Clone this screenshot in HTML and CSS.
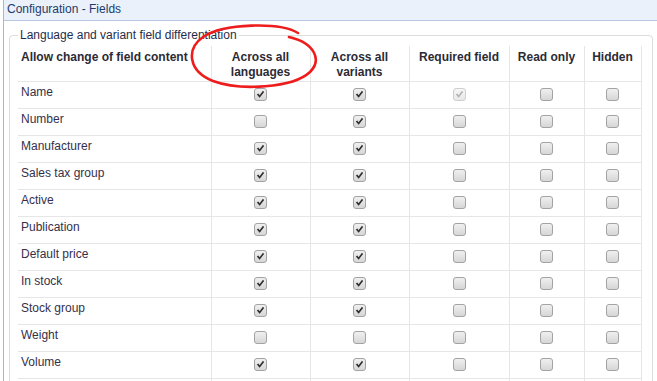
FILE: index.html
```html
<!DOCTYPE html>
<html lang="en">

<head>
    <meta charset="UTF-8">
    <meta name="viewport" content="width=device-width, initial-scale=1.0">
    <title>Configuration - Fields</title>
    <link rel="stylesheet" href="styles.css">
</head>

<body>
    <div class="panel">
        <div class="panel-head">Configuration - Fields</div>

        <fieldset class="group">
            <legend>Language and variant field differentiation</legend>
            <table class="fields">
                <colgroup>
                    <col class="c-name">
                    <col class="c-lang">
                    <col class="c-var">
                    <col class="c-req">
                    <col class="c-ro">
                    <col class="c-hid">
                </colgroup>
                <thead>
                    <tr>
                        <th class="left">Allow change of field content</th>
                        <th>Across all languages</th>
                        <th>Across all variants</th>
                        <th>Required field</th>
                        <th>Read only</th>
                        <th>Hidden</th>
                    </tr>
                </thead>
                <tbody id="rows"></tbody>
            </table>
        </fieldset>

        <!-- hand drawn mark around the column header -->
        <svg class="mark" width="657" height="381" viewBox="0 0 657 381">
            <path d="M298 33 C280 22 224 23 203 37 C186 49 188 71 213 81 C240 91 293 88 310 72 C322 60 315 43 289 37"
                fill="none" stroke="#ee1c1c" stroke-width="2.6" stroke-linecap="round" />
        </svg>
    </div>

    <script>
        // name, languages, variants, required, read only, hidden  (2 = checked + disabled)
        const fields = [
            ["Name", 1, 1, 2, 0, 0],
            ["Number", 0, 1, 0, 0, 0],
            ["Manufacturer", 1, 1, 0, 0, 0],
            ["Sales tax group", 1, 1, 0, 0, 0],
            ["Active", 1, 1, 0, 0, 0],
            ["Publication", 1, 1, 0, 0, 0],
            ["Default price", 1, 1, 0, 0, 0],
            ["In stock", 1, 1, 0, 0, 0],
            ["Stock group", 1, 1, 0, 0, 0],
            ["Weight", 0, 0, 0, 0, 0],
            ["Volume", 1, 1, 0, 0, 0]
        ];

        const tick = '<svg viewBox="0 0 13 13" width="11" height="11"><path d="M2.2 6.6 L3.9 5.4 L5.4 7.4 L9.4 2.2 L10.8 3.4 L5.5 10.3 Z"/></svg>';

        const rows = document.getElementById("rows");
        fields.forEach(function (f) {
            let html = "<td class=\"left\">" + f[0] + "</td>";
            for (let i = 1; i < f.length; i++) {
                let cls = "cb";
                if (f[i] == 1) cls += " on";
                if (f[i] == 2) cls += " on off";
                html += "<td><span class=\"" + cls + "\">" + (f[i] ? tick : "") + "</span></td>";
            }
            const tr = document.createElement("tr");
            tr.innerHTML = html;
            rows.appendChild(tr);
        });

        // the list goes on below the fold
        const more = document.createElement("tr");
        more.className = "more";
        more.innerHTML = "<td class=\"left\"></td><td></td><td></td><td></td><td></td><td></td>";
        rows.appendChild(more);
    </script>
</body>

</html>
```

FILE: styles.css
```css
body {
    margin: 0;
    font-family: "Liberation Sans", Arial, sans-serif;
    font-size: 12px;
    color: #333;
    background: #fff;
    overflow: hidden;
}

.panel {
    position: relative;
    margin-left: 3px;
    border-left: 1px solid #a7b6d2;
    height: 381px;
    overflow: hidden;
}

.panel-head {
    height: 20px;
    line-height: 19px;
    padding-left: 3px;
    background: #eaf1fa;
    border-bottom: 1px solid #b7c7e2;
    color: #1d3a6c;
}

/* fieldset round the table */
.group {
    margin: 7px 4px 0 5px;
    padding: 0 8px;
    border: 1px solid #dcdcdc;
    border-radius: 4px;
}

.group legend {
    padding: 0 2px;
    line-height: 14px;
    color: #1f2d4c;
}

.fields {
    margin-top: 4px;
    width: 623px;
    table-layout: fixed;
    border-collapse: collapse;
}

.c-name { width: 193px; }
.c-lang { width: 99px; }
.c-var { width: 99px; }
.c-req { width: 100px; }
.c-ro { width: 75px; }
.c-hid { width: 57px; }

.fields th,
.fields td {
    border-left: 1px solid #e6e6e6;
    border-bottom: 1px solid #e6e6e6;
    vertical-align: top;
    text-align: center;
}

.fields th:last-child,
.fields td:last-child {
    border-right: 1px solid #e6e6e6;
}

.fields th.left,
.fields td.left {
    border-left: none;
    text-align: left;
    padding-left: 3px;
}

.fields thead tr {
    height: 35px;
}

.fields th {
    padding: 4px 4px 0;
    line-height: 15px;
    font-weight: bold;
    color: #2b2b36;
}

.fields tbody tr {
    height: 27px;
}

.fields td {
    padding: 2px 4px 0;
    line-height: 16px;
    color: #35304a;
}

/* checkbox */
.cb {
    display: block;
    box-sizing: border-box;
    width: 13px;
    height: 13px;
    margin: 4px auto 0;
    border: 1px solid #a3a3a3;
    border-radius: 3px;
    background: linear-gradient(#f0f0f0, #d6d6d6);
}

.cb svg {
    display: block;
    fill: #2e2e2e;
}

.cb.off {
    border-color: #cfcfcf;
    background: linear-gradient(#f6f6f6, #e8e8e8);
}

.cb.off svg {
    fill: #b4b4b4;
}

.mark {
    position: absolute;
    left: -4px;
    top: 0;
    pointer-events: none;
}
```
